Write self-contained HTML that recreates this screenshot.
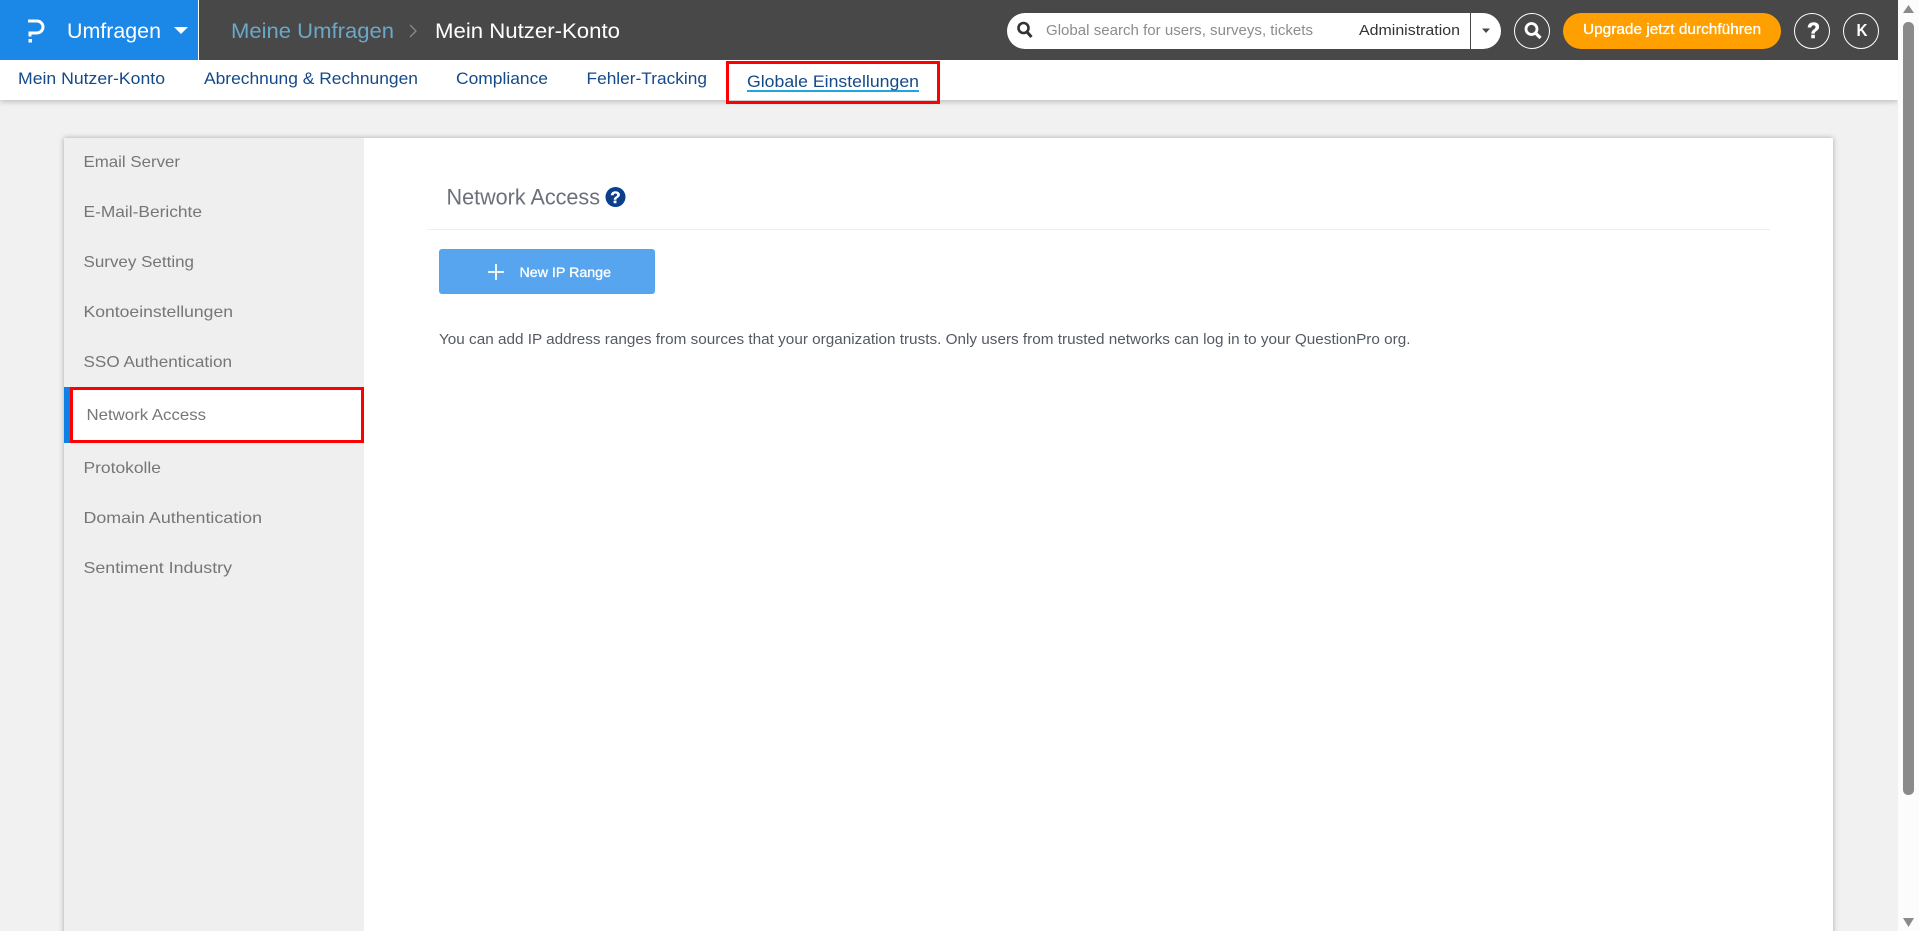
<!DOCTYPE html>
<html lang="de">
<head>
<meta charset="utf-8">
<title>Network Access</title>
<style>
html,body{margin:0;padding:0;width:1919px;height:931px;overflow:hidden;background:#f1f1f1;font-family:"Liberation Sans",sans-serif}
#page{position:absolute;left:0;top:0;width:1919px;height:931px;overflow:hidden;background:#f1f1f1}
#page div{position:absolute;box-sizing:border-box}
svg{position:absolute;left:0;top:0}
text{font-family:"Liberation Sans",sans-serif}
</style>
</head>
<body>
<div id="page">
<div style="left:0;top:60px;width:1898px;height:40px;background:#fff;box-shadow:0 2px 5px rgba(0,0,0,.2)"></div>
<div style="left:0;top:0;width:1898px;height:60px;background:#484848"></div>
<div style="left:0;top:0;width:198px;height:60px;background:#1b87e6"></div>
<div style="left:198px;top:0;width:1px;height:60px;background:#fff"></div>

<div style="left:1007px;top:13px;width:494px;height:36px;background:#fff;border-radius:18px"></div>
<div style="left:1470px;top:13px;width:1px;height:36px;background:#484848"></div>
<div style="left:1514px;top:13px;width:36px;height:36px;border:1px solid #fff;border-radius:50%"></div>
<div style="left:1563px;top:13px;width:218px;height:36px;background:#ff9f00;border-radius:18px"></div>
<div style="left:1794px;top:13px;width:36px;height:36px;border:1px solid #fff;border-radius:50%"></div>
<div style="left:1843px;top:13px;width:36px;height:36px;border:1px solid #fff;border-radius:50%"></div>

<div style="left:726px;top:61px;width:214px;height:43px;border:3px solid #f00"></div>
<div style="left:747px;top:90px;width:172px;height:2px;background:#1fa5e0"></div>

<div style="left:64px;top:138px;width:1769px;height:830px;background:#fff;box-shadow:0 0 5px rgba(0,0,0,.3)"></div>
<div style="left:64px;top:138px;width:300px;height:830px;background:#efefef"></div>
<div style="left:64px;top:387px;width:6px;height:56px;background:#0f80e6"></div>
<div style="left:70px;top:387px;width:294px;height:56px;background:#fff;border:3px solid #f00"></div>

<div style="left:427px;top:229px;width:1343px;height:1px;background:#eee"></div>
<div style="left:439px;top:249px;width:216px;height:45px;background:#57a5ee;border-radius:3px"></div>

<div style="left:1898px;top:0;width:21px;height:931px;background:#fcfcfc"></div>
<div style="left:1903px;top:22px;width:11px;height:773px;background:#8a8a8a;border-radius:5px"></div>

<svg width="1919" height="931" viewBox="0 0 1919 931" xmlns="http://www.w3.org/2000/svg">
  <!-- logo -->
  <path d="M28 21H37a6 6 0 0 1 0 12H30V36.5" fill="none" stroke="#fff" stroke-width="3"/>
  <rect x="28.5" y="39" width="3.5" height="3.5" fill="#fff"/>
  <text x="67" y="38" font-size="21" fill="#fff" textLength="94" lengthAdjust="spacingAndGlyphs">Umfragen</text>
  <path d="M174 27h14l-7 7z" fill="#fff"/>

  <!-- breadcrumb -->
  <text x="231" y="38" font-size="21" fill="#6ba7c7" textLength="163" lengthAdjust="spacingAndGlyphs">Meine Umfragen</text>
  <path d="M410 25l6 6-6 6" fill="none" stroke="#8a8a8a" stroke-width="1.3"/>
  <text x="435" y="38" font-size="21" fill="#fff" textLength="185" lengthAdjust="spacingAndGlyphs">Mein Nutzer-Konto</text>

  <!-- search -->
  <circle cx="1023.5" cy="28" r="5" fill="none" stroke="#333" stroke-width="2.6"/>
  <path d="M1027 32l4.5 5" stroke="#333" stroke-width="3" fill="none"/>
  <text x="1046" y="35" font-size="15" fill="#8c8c8c" textLength="267" lengthAdjust="spacingAndGlyphs">Global search for users, surveys, tickets</text>
  <text x="1359" y="35" font-size="14.5" fill="#333" textLength="101" lengthAdjust="spacingAndGlyphs">Administration</text>
  <path d="M1482 28.5h8l-4 4.5z" fill="#484848"/>
  <circle cx="1531.5" cy="29" r="5.5" fill="none" stroke="#fff" stroke-width="2.8"/>
  <path d="M1535.5 33l5 5" stroke="#fff" stroke-width="3.2" fill="none"/>
  <text x="1583" y="34" font-size="14.5" fill="#fff" stroke="#fff" stroke-width=".3" textLength="178" lengthAdjust="spacingAndGlyphs">Upgrade jetzt durchführen</text>
  <text x="1807" y="38" font-size="22" font-weight="700" fill="#fff" stroke="#fff" stroke-width=".6" textLength="13" lengthAdjust="spacingAndGlyphs">?</text>
  <text x="1856.5" y="36" font-size="17.5" font-weight="700" fill="#fff" textLength="11" lengthAdjust="spacingAndGlyphs">K</text>

  <!-- tabs -->
  <g font-size="16.5" fill="#154a8a">
    <text x="18" y="84" textLength="147" lengthAdjust="spacingAndGlyphs">Mein Nutzer-Konto</text>
    <text x="204" y="84" textLength="214" lengthAdjust="spacingAndGlyphs">Abrechnung &amp; Rechnungen</text>
    <text x="456" y="84" textLength="92" lengthAdjust="spacingAndGlyphs">Compliance</text>
    <text x="586.5" y="84" textLength="120.5" lengthAdjust="spacingAndGlyphs">Fehler-Tracking</text>
    <text x="747" y="87" textLength="172" lengthAdjust="spacingAndGlyphs">Globale Einstellungen</text>
  </g>

  <!-- sidebar -->
  <g font-size="16" fill="#767676">
    <text x="83.5" y="167" textLength="96.5" lengthAdjust="spacingAndGlyphs">Email Server</text>
    <text x="83.5" y="217" textLength="118.5" lengthAdjust="spacingAndGlyphs">E-Mail-Berichte</text>
    <text x="83.5" y="267" textLength="110.5" lengthAdjust="spacingAndGlyphs">Survey Setting</text>
    <text x="83.5" y="317" textLength="149.5" lengthAdjust="spacingAndGlyphs">Kontoeinstellungen</text>
    <text x="83.5" y="367" textLength="148.5" lengthAdjust="spacingAndGlyphs">SSO Authentication</text>
    <text x="86.5" y="420" textLength="119.5" lengthAdjust="spacingAndGlyphs">Network Access</text>
    <text x="83.5" y="473" textLength="77.5" lengthAdjust="spacingAndGlyphs">Protokolle</text>
    <text x="83.5" y="523" textLength="178.5" lengthAdjust="spacingAndGlyphs">Domain Authentication</text>
    <text x="83.5" y="573" textLength="148.5" lengthAdjust="spacingAndGlyphs">Sentiment Industry</text>
  </g>

  <!-- main -->
  <text x="446.5" y="204.5" font-size="22" fill="#6b707a" textLength="153.5" lengthAdjust="spacingAndGlyphs">Network Access</text>
  <circle cx="615.5" cy="197" r="10" fill="#0b3f8c"/>
  <text x="615.5" y="203" font-size="17" font-weight="700" fill="#fff" stroke="#fff" stroke-width=".4" text-anchor="middle">?</text>
  <path d="M488 272h16M496 264v16" stroke="#fff" stroke-width="1.8" fill="none"/>
  <text x="519.5" y="277" font-size="14" fill="#fff" stroke="#fff" stroke-width=".3" textLength="91.5" lengthAdjust="spacingAndGlyphs">New IP Range</text>
  <text x="439" y="344" font-size="14.5" fill="#555a62" textLength="971.5" lengthAdjust="spacingAndGlyphs">You can add IP address ranges from sources that your organization trusts. Only users from trusted networks can log in to your QuestionPro org.</text>

  <!-- scrollbar arrows -->
  <path d="M1908.5 5l5.5 8h-11z" fill="#8a8a8a"/>
  <path d="M1903 918h11l-5.5 9z" fill="#8a8a8a"/>
</svg>
</div>
</body>
</html>
